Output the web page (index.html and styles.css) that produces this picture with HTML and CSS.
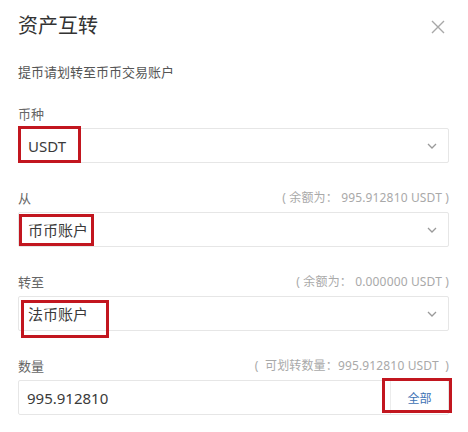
FILE: index.html
```html
<!DOCTYPE html>
<html lang="zh-CN">
<head>
<meta charset="utf-8">
<title>资产互转</title>
<link rel="stylesheet" href="styles.css">
</head>
<body>
<div class="dialog">
  <div class="header">
    <h1 class="title">资产互转</h1>
    <svg class="close" width="14" height="14" viewBox="0 0 14 14"><path d="M1 1L13 13M13 1L1 13" stroke="#a8a8a8" stroke-width="1.4" fill="none"/></svg>
  </div>
  <p class="subtitle">提币请划转至币币交易账户</p>

  <div class="field">
    <div class="label-row"><span class="label">币种</span></div>
    <div class="select">
      <span class="value">USDT</span>
      <svg class="chev" width="10" height="6" viewBox="0 0 10 6"><path d="M1 1L5 5L9 1" stroke="#9a9a9a" stroke-width="1.3" fill="none"/></svg>
      <span class="mark m1"></span>
    </div>
  </div>

  <div class="field">
    <div class="label-row"><span class="label">从</span><span class="hint">( 余额为： 995.912810 USDT )</span></div>
    <div class="select">
      <span class="value">币币账户</span>
      <svg class="chev" width="10" height="6" viewBox="0 0 10 6"><path d="M1 1L5 5L9 1" stroke="#9a9a9a" stroke-width="1.3" fill="none"/></svg>
      <span class="mark m2"></span>
    </div>
  </div>

  <div class="field">
    <div class="label-row"><span class="label">转至</span><span class="hint">( 余额为： 0.000000 USDT )</span></div>
    <div class="select">
      <span class="value">法币账户</span>
      <svg class="chev" width="10" height="6" viewBox="0 0 10 6"><path d="M1 1L5 5L9 1" stroke="#9a9a9a" stroke-width="1.3" fill="none"/></svg>
      <span class="mark m3"></span>
    </div>
  </div>

  <div class="field">
    <div class="label-row"><span class="label">数量</span><span class="hint">(&nbsp; 可划转数量：995.912810 USDT &nbsp;)</span></div>
    <div class="select amount">
      <span class="value num">995.912810</span>
      <span class="addon">全部</span>
      <span class="mark m4"></span>
    </div>
  </div>
</div>
</body>
</html>
```
FILE: styles.css
```css
* { box-sizing: border-box; }
html, body { margin: 0; padding: 0; background: #fff; }
body {
  font-family: "Noto Sans", "Noto Sans CJK SC", sans-serif;
  color: #333;
}
.dialog {
  width: 431px;
  margin-left: 18px;
  padding-top: 10px;
}
.header {
  display: flex;
  align-items: center;
  justify-content: space-between;
  height: 30px;
}
.title {
  margin: 0;
  font-family: "Noto Sans CJK SC", sans-serif;
  font-size: 20px;
  font-weight: 400;
  line-height: 30px;
  color: #333;
}
.close { margin-right: 4px; margin-top: 4px; }
.subtitle {
  margin: 23px 0 0 0;
  font-family: "Noto Sans CJK SC", sans-serif;
  font-size: 13px;
  line-height: 18px;
  color: #555;
}
.field { margin-top: 23px; }
.field + .field { margin-top: 25px; }
.label-row {
  display: flex;
  justify-content: space-between;
  align-items: center;
  height: 18px;
}
.label {
  font-family: "Noto Sans CJK SC", sans-serif;
  font-size: 13px;
  color: #666;
}
.hint {
  font-family: "Noto Sans", "Noto Sans CJK SC", sans-serif;
  font-size: 12px;
  color: #a9a9a9;
  letter-spacing: 0.15px;
}
.select {
  position: relative;
  margin-top: 6px;
  height: 35px;
  border: 1px solid #e6e6e6;
  border-radius: 2px;
  display: flex;
  align-items: center;
  justify-content: space-between;
  padding-left: 9px;
  padding-right: 11px;
}
.value {
  font-family: "Noto Sans", "Noto Sans CJK SC", sans-serif;
  font-size: 15px;
  color: #3a3a3a;
}
.num { margin-left: -1px; }
.chev { margin-top: 1px; }
.amount { padding-right: 0; }
.addon {
  align-self: stretch;
  width: 58px;
  border-left: 1px solid #ececec;
  display: flex;
  align-items: center;
  justify-content: center;
  font-family: "Noto Sans CJK SC", sans-serif;
  font-size: 12px;
  color: #3e72b4;
}
.mark {
  position: absolute;
  border: 3px solid #c2161f;
  pointer-events: none;
}
.m1 { left: -1px; top: -3px; width: 63px; height: 37px; }
.m2 { left: 0px; top: 1px; width: 75px; height: 32px; }
.m3 { left: 2px; top: 3px; width: 88px; height: 38px; }
.m4 { left: 363px; top: -3px; width: 70px; height: 35px; }
```
